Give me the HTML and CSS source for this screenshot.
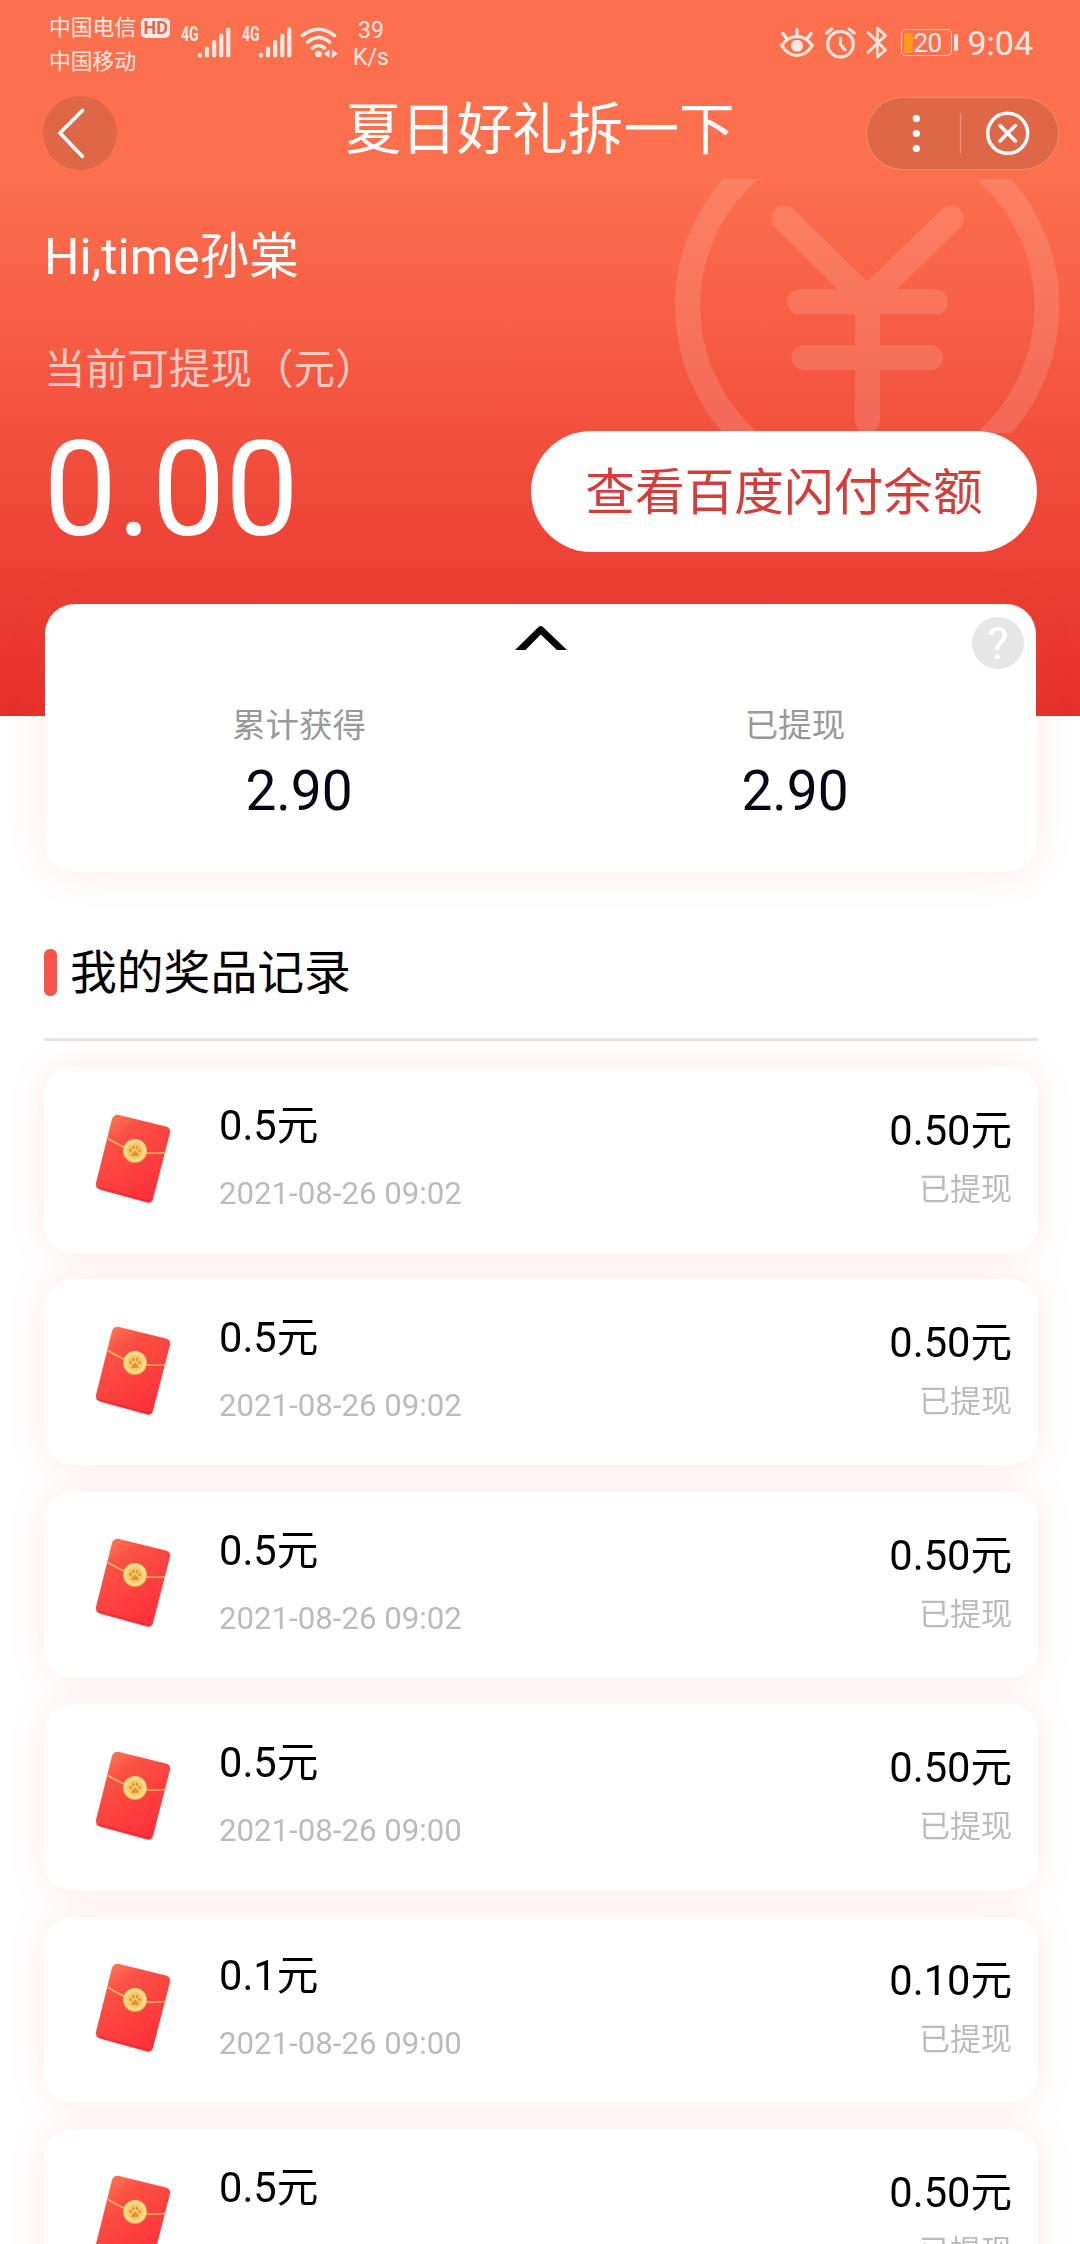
FILE: index.html
```html
<!DOCTYPE html>
<html lang="zh-CN">
<head>
<meta charset="utf-8">
<title>夏日好礼拆一下</title>
<link rel="stylesheet" href="styles.css">
</head>
<body>
<svg class="defs" width="0" height="0" aria-hidden="true">
  <defs>
    <linearGradient id="red" x1="0.1" y1="0" x2="0.7" y2="1">
      <stop offset="0" stop-color="#ff7d58"/>
      <stop offset="0.28" stop-color="#fb5145"/>
      <stop offset="1" stop-color="#ff2f38"/>
    </linearGradient>
    <symbol id="signal" viewBox="0 0 34 31">
      <path d="M3 28v.6M10 21.500v7M17.200 15v13.500M24.300 8.500v20M31.300 2.500v26" stroke="currentColor" stroke-width="4.200" stroke-linecap="round"/>
    </symbol>
    <symbol id="envelope" viewBox="0 0 80 94">
      <path d="M27 5 74 16.500Q79 18 78 23L61 89Q59.500 93.500 55 92.500L9 80Q3 78 4 73L20 9Q22 4 27 5Z" fill="url(#red)"/>
      <path d="M4.500 77 59 91.500" stroke="#e51f33" stroke-width="1.600" opacity=".5"/>
      <path d="M16 28.500Q30 37 43 41.500Q58 44.500 74 42.500" fill="none" stroke="#f9b45f" stroke-width="1.600"/>
      <circle cx="43" cy="41" r="12" fill="#eda94c"/>
      <circle cx="43" cy="40.500" r="11.300" fill="#fddf8c"/>
      <circle cx="43" cy="41" r="8.400" fill="#f8c969"/>
      <g fill="#dc9638"><ellipse cx="38.500" cy="40.500" rx="1.300" ry="1.900"/><ellipse cx="41.300" cy="37.400" rx="1.300" ry="1.900"/><ellipse cx="45" cy="37.400" rx="1.300" ry="1.900"/><ellipse cx="47.600" cy="40.600" rx="1.300" ry="1.900"/><path d="M43 40.500Q45 41 47 45Q46 47 43 46Q40 47 39 45Q41 41 43 40.500Z"/></g>
    </symbol>
  </defs>
</svg>

<header class="hero">
  <div class="statusbar">
    <div class="carriers">
      <div class="carrier">中国电信<span class="hd">HD</span></div>
      <div class="carrier">中国移动</div>
    </div>
    <span class="net">4G</span>
    <svg class="bars" width="34" height="31"><use href="#signal"/></svg>
    <span class="net second">4G</span>
    <svg class="bars" width="34" height="31"><use href="#signal"/></svg>
    <svg class="wifi" width="38" height="32" viewBox="0 0 38 32" fill="none" stroke="currentColor" stroke-width="3.600" stroke-linecap="round">
      <path d="M2.500 8.500Q18.500-4 34.500 8.500M7.800 15Q18.500 6 29.500 15M12.800 21Q18.500 16 24.500 21"/>
      <circle cx="18.500" cy="27" r="3.300" fill="currentColor" stroke="none"/>
      <path d="M29.500 22.500v8.500L24 26.800ZM31.800 22.500v8.500L37.800 26.800Z" fill="currentColor" stroke="none"/>
    </svg>
    <div class="speed"><span>39</span><span>K/s</span></div>
    <div class="status-right">
      <svg width="34" height="31" viewBox="0 0 34 31" fill="none" stroke="currentColor" stroke-width="3.200" stroke-linecap="round">
        <path d="M1.800 18.500Q8 9.500 17 9.500T32.200 18.500Q26 28.500 17 28.500T1.800 18.500ZM17 2.500v6M3 6.500l4 5.500M31 6.500l-4 5.500"/>
        <circle cx="17" cy="18.700" r="6" fill="currentColor" stroke="none"/>
      </svg>
      <svg class="alarm" width="31" height="32" viewBox="0 0 31 32" fill="none" stroke="currentColor" stroke-width="3" stroke-linecap="round">
        <circle cx="15.500" cy="17.200" r="12.800"/>
        <path d="M15.500 11.500v6l4.500 5.500M1.800 6l5-4M29.200 6l-5-4"/>
      </svg>
      <svg class="bt" width="22" height="33" viewBox="0 0 22 33" fill="none" stroke="currentColor" stroke-width="2.600" stroke-linejoin="round" stroke-linecap="round">
        <path d="M2 6.500 19.500 24 11.500 31V2L19.500 9.500 2 26.500"/>
      </svg>
      <div class="battery"><div class="cell"><i></i><span>20</span></div><b></b></div>
      <span class="clock">9:04</span>
    </div>
  </div>

  <svg class="coin" width="390" height="254" viewBox="0 0 390 254" fill="none" stroke="#fff" stroke-linecap="round">
    <g opacity=".13">
      <circle cx="195.200" cy="127" r="179.700" stroke-width="25"/>
      <path d="M112.500 39.500 195.200 121 279 39.500" stroke-width="26"/>
      <path d="M127.500 122.800H263.500M132 178.500H258.500" stroke-width="25"/>
      <path d="M195.500 122V241" stroke-width="25"/>
    </g>
  </svg>

  <nav class="navbar">
    <div class="back"><svg width="74" height="74" viewBox="0 0 74 74" fill="none" stroke="#fff" stroke-width="3.600" stroke-linecap="round"><path d="M39.500 14.500 17 37 39.500 60.500"/></svg></div>
    <h1>夏日好礼拆一下</h1>
    <div class="capsule">
      <svg width="192" height="72" viewBox="0 0 192 72" fill="none" stroke="#fff">
        <g fill="#fff" stroke="none"><circle cx="49.400" cy="20.500" r="3.600"/><circle cx="49.400" cy="35.500" r="3.600"/><circle cx="49.400" cy="50.500" r="3.600"/></g>
        <path d="M93.500 15.500v40" stroke-width="1.200" opacity=".3"/>
        <circle cx="140.700" cy="35.300" r="20" stroke-width="3.500"/>
        <path d="M133 27.600 148.400 43M148.400 27.600 133 43" stroke-width="3.600" stroke-linecap="round"/>
      </svg>
    </div>
  </nav>

  <p class="greeting">Hi,time孙棠</p>
  <p class="label">当前可提现（元）</p>
  <div class="balance">
    <strong>0.00</strong>
    <a class="wallet">查看百度闪付余额</a>
  </div>
</header>

<section class="summary">
  <svg class="fold" width="52" height="26" viewBox="0 0 52 26"><path d="M0 25 23.500 2Q25.700 0 28 2L52 25H42L25.700 9.500 10.500 25Z"/></svg>
  <span class="help">?</span>
  <div class="totals">
    <div><span>累计获得</span><b>2.90</b></div>
    <div><span>已提现</span><b>2.90</b></div>
  </div>
</section>

<main class="records">
  <h2>我的奖品记录</h2>
  <ul>
    <li><svg class="icon" width="80" height="94"><use href="#envelope"/></svg><div class="info"><b>0.5元</b><time>2021-08-26 09:02</time></div><div class="amount"><b>0.50元</b><span>已提现</span></div></li>
    <li><svg class="icon" width="80" height="94"><use href="#envelope"/></svg><div class="info"><b>0.5元</b><time>2021-08-26 09:02</time></div><div class="amount"><b>0.50元</b><span>已提现</span></div></li>
    <li><svg class="icon" width="80" height="94"><use href="#envelope"/></svg><div class="info"><b>0.5元</b><time>2021-08-26 09:02</time></div><div class="amount"><b>0.50元</b><span>已提现</span></div></li>
    <li><svg class="icon" width="80" height="94"><use href="#envelope"/></svg><div class="info"><b>0.5元</b><time>2021-08-26 09:00</time></div><div class="amount"><b>0.50元</b><span>已提现</span></div></li>
    <li><svg class="icon" width="80" height="94"><use href="#envelope"/></svg><div class="info"><b>0.1元</b><time>2021-08-26 09:00</time></div><div class="amount"><b>0.10元</b><span>已提现</span></div></li>
    <li><svg class="icon" width="80" height="94"><use href="#envelope"/></svg><div class="info"><b>0.5元</b></div><div class="amount"><b>0.50元</b><span>已提现</span></div></li>
  </ul>
</main>
</body>
</html>
```

FILE: styles.css
```css
* { box-sizing: border-box; margin: 0; padding: 0; }
html, body { height: 2244px; overflow: hidden; }
body {
  width: 1080px;
  background: #fefefe;
  font-family: Roboto, "Noto Sans CJK SC", sans-serif;
  color: #000;
}
svg { display: block; flex: none; }
b, strong, h1, h2 { font-weight: 400; }
ul { list-style: none; }
.defs { position: absolute; }

.hero {
  position: relative;
  height: 716px;
  background: linear-gradient(#fd704e 0, #fd704e 170px, #e62f2c 716px);
  color: #fff;
}

/* status bar */
.statusbar {
  display: flex;
  height: 96px;
  padding: 10px 47px 0 49px;
  color: #ffe9e2;
}
.carriers { width: 132px; padding-top: 1px; }
.carrier {
  display: flex;
  align-items: center;
  height: 33.500px;
  font-size: 21.800px;
  line-height: 33px;
  white-space: nowrap;
}
.hd {
  width: 29px;
  height: 20px;
  margin-left: 5px;
  border-radius: 5px;
  background: #ffe9e2;
  color: #e0664a;
  font-size: 18px;
  font-weight: 700;
  line-height: 20px;
  text-align: center;
}
.net {
  width: 16px;
  margin-top: 15px;
  font: 700 20px/19px Roboto, sans-serif;
  transform: scaleX(.7);
  transform-origin: 0 0;
}
.net.second { margin-left: 11px; }
.bars { margin-top: 17px; }
.wifi { margin: 17px 0 0 8px; }
.speed {
  display: flex;
  flex-direction: column;
  width: 40px;
  margin: 7px 0 0 13px;
  font-size: 23px;
  line-height: 27px;
  text-align: center;
}
.status-right { display: flex; margin-left: auto; }
.status-right > svg { margin-top: 17px; }
.status-right > .alarm { margin-left: 11px; }
.status-right > .bt { margin: 16px 0 0 10px; }
.battery { display: flex; align-items: center; height: 27px; margin: 19px 0 0 13px; }
.cell {
  display: flex;
  align-items: center;
  width: 51px;
  height: 27px;
  padding-left: 2px;
  border: 1.500px solid #ffd9cd;
  border-radius: 5px;
}
.cell i { width: 9px; height: 20px; border-radius: 2px; background: #ff9b1a; }
.cell span { font-size: 26px; line-height: 26px; letter-spacing: -.6px; }
.battery > b { width: 4px; height: 17px; margin-left: 2px; border-radius: 2px; background: #ffe9e2; }
.clock { margin-left: 9px; font-size: 34px; line-height: 66px; }

.coin { position: absolute; left: 672px; top: 179px; }

/* navigation */
.navbar {
  position: relative;
  display: flex;
  height: 74px;
  padding: 0 21px 0 43px;
}
.back, .capsule { background: rgba(90, 65, 45, .19); }
.back { width: 74px; height: 74px; border-radius: 50%; }
.navbar h1 { margin: 2px 0 0 228.500px; font-size: 55.600px; line-height: 64px; }
.capsule {
  width: 193px;
  height: 73px;
  margin: 1px 0 0 auto;
  border: 1px solid rgba(255, 190, 170, .4);
  border-radius: 37px;
}

.greeting { position: relative; margin: 56px 0 0 44px; font-size: 49.700px; line-height: 62px; }
.label { margin: 52px 0 0 44px; font-size: 41.600px; line-height: 60px; color: rgba(255, 255, 255, .7); }
.balance {
  position: relative;
  display: flex;
  align-items: center;
  justify-content: space-between;
  height: 121px;
  margin: 31px 43px 0 43.500px;
}
.balance strong { margin-top: -2px; font-size: 131px; line-height: 121px; }
.wallet {
  width: 506px;
  height: 121px;
  border-radius: 61px;
  background: #fff;
  color: #d53d3a;
  font-size: 49.700px;
  line-height: 125px;
  text-align: center;
}

/* totals card */
.summary {
  position: relative;
  height: 268px;
  margin: -112px 44px 0 45px;
  padding-top: 21px;
  border-radius: 30px;
  background: #fff;
  box-shadow: 0 0 40px rgba(255, 80, 60, .11);
}
.fold { margin: 0 auto; }
.help {
  position: absolute;
  top: 13px;
  right: 12px;
  width: 52px;
  height: 52px;
  border-radius: 50%;
  background: #e6e6e6;
  color: #fff;
  font-size: 44px;
  line-height: 54px;
  text-align: center;
}
.totals { display: flex; margin: 52px -7px 0 6px; }
.totals div { flex: 1; display: flex; flex-direction: column; align-items: center; }
.totals span { font-size: 33.500px; line-height: 46px; color: #999; }
.totals b { margin-top: 9px; font-size: 55px; line-height: 66px; color: #0a0418; }

/* records */
.records { padding: 66px 42px 0 44px; }
.records h2 {
  display: flex;
  align-items: center;
  height: 103px;
  padding-bottom: 31px;
  border-bottom: 3px solid #e4e5e6;
  font-size: 46.800px;
  line-height: 66px;
}
.records h2::before {
  content: "";
  width: 13px;
  height: 47px;
  margin-right: 13px;
  border-radius: 6px;
  background: #f9544a;
}
.records ul {
  display: grid;
  gap: 26.600px;
  padding-top: 26px;
  filter: drop-shadow(0 0 17px rgba(255, 80, 60, .11));
}
.records li {
  display: flex;
  height: 185.800px;
  padding-right: 26px;
  border-radius: 28px;
  background: #fff;
}
.icon { margin: 42.500px 0 0 48px; }
.info { margin-left: 47px; }
.info b, .info time, .amount b, .amount span { display: block; }
.info b { margin-top: 30px; font-size: 41.600px; line-height: 58px; }
.info time { margin-top: 17px; font-size: 31.200px; line-height: 44px; color: #bbb; }
.amount { margin-left: auto; text-align: right; }
.amount b { margin-top: 35px; font-size: 41.600px; line-height: 58px; }
.amount span { margin-top: 8px; font-size: 31px; line-height: 44px; color: #bbb; }
```
